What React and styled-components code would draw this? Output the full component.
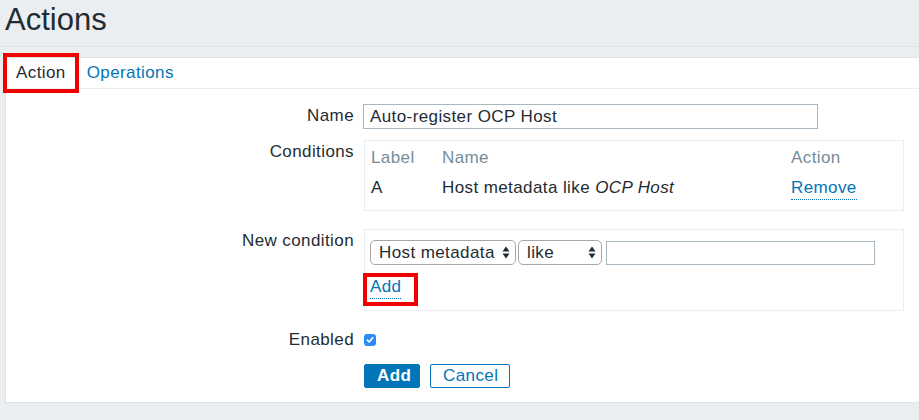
import React from "react";
import styled, { createGlobalStyle } from "styled-components";

const GlobalStyle = createGlobalStyle`
	body {
		margin: 0;
		background: #ebeef0;
		font-family: "Liberation Sans", Arial, sans-serif;
		color: #1f2c33;
	}
`;

const conditions = [{ label: "A", text: "Host metadata like ", value: "OCP Host" }];

const ArrowsIcon = () => (
	<svg width="8" height="13" viewBox="0 0 8 13">
		<path d="M4 0.5 L7.5 5.5 L0.5 5.5 Z" fill="#1f2c33" />
		<path d="M4 12.5 L7.5 7.5 L0.5 7.5 Z" fill="#1f2c33" />
	</svg>
);

const CheckIcon = () => (
	<svg width="8" height="8" viewBox="0 0 8 8">
		<path d="M1.3 4.2 L3.2 6 L6.7 1.8" fill="none" stroke="#fff" strokeWidth="1.6" strokeLinecap="round" strokeLinejoin="round" />
	</svg>
);

const App = () => {
	return (
		<>
			<GlobalStyle />
			<Header>
				<h1>Actions</h1>
			</Header>
			<Panel>
				<TabBar>
					<Tab $active $highlight>Action</Tab>
					<Tab>Operations</Tab>
				</TabBar>
				<Form>
					<Row $space={15}>
						<Label>Name</Label>
						<TextInput $width={455} defaultValue="Auto-register OCP Host" />
					</Row>
					<Row $space={11}>
						<Label>Conditions</Label>
						<Box $pad="2px 6px 7px">
							<CondTable>
								<thead>
									<tr>
										<th style={{ width: 71 }}>Label</th>
										<th style={{ width: 349 }}>Name</th>
										<th>Action</th>
									</tr>
								</thead>
								<tbody>
									{conditions.map((c) => (
										<tr key={c.label}>
											<td>{c.label}</td>
											<td>
												{c.text}
												<em>{c.value}</em>
											</td>
											<td>
												<LinkText>Remove</LinkText>
											</td>
										</tr>
									))}
								</tbody>
							</CondTable>
						</Box>
					</Row>
					<Row $space={18}>
						<Label>New condition</Label>
						<Box $pad="10px 5px 10px" $height={82}>
							<Controls>
								<SelectBox $width={146}>
									Host metadata
									<span className="arrows">
										<ArrowsIcon />
									</span>
								</SelectBox>
								<SelectBox $width={84}>
									like
									<span className="arrows">
										<ArrowsIcon />
									</span>
								</SelectBox>
								<TextInput $width={269} $small />
							</Controls>
							<Highlight>
								<LinkText>Add</LinkText>
							</Highlight>
						</Box>
					</Row>
					<Row $space={17}>
						<Label>Enabled</Label>
						<CheckLine>
							<Checkbox>
								<CheckIcon />
							</Checkbox>
						</CheckLine>
					</Row>
					<Row $space={12}>
						<Label />
						<Buttons>
							<Button $primary>Add</Button>
							<Button>Cancel</Button>
						</Buttons>
					</Row>
				</Form>
			</Panel>
		</>
	);
};

// # STYLED COMPONENTS

const Header = styled.header`
	box-sizing: border-box;
	height: 47px;
	border-bottom: 1px solid #dfe4e7;
	padding: 4px 0 0 5px;

	h1 {
		margin: 0;
		font-size: 31px;
		line-height: 31px;
		font-weight: normal;
		color: #1f2c33;
	}
`;

const Panel = styled.section`
	margin: 10px 0 0 5px;
	background: #fff;
	border: 1px solid #dfe4e7;
	border-right: none;
	padding-bottom: 14px;
`;

const TabBar = styled.nav`
	display: flex;
	gap: 5px;
	height: 30px;
	padding-left: 2px;
	border-bottom: 1px solid #ebeef0;
`;

const Tab = styled.a`
	display: block;
	padding: 0 8px;
	font-size: 17px;
	letter-spacing: 0.4px;
	line-height: 30px;
	color: ${(p) => (p.$active ? "#1f2c33" : "#0275b8")};
	cursor: pointer;
	outline: ${(p) => (p.$highlight ? "4px solid #f20000" : "none")};
	outline-offset: 1px;
`;

const Form = styled.div`
	display: flex;
	flex-direction: column;
`;

const Row = styled.div`
	display: flex;
	align-items: flex-start;
	gap: 9px;
	margin-top: ${(p) => p.$space}px;
	font-size: 17px;
	letter-spacing: 0.4px;
`;

const Label = styled.div`
	width: 348px;
	flex-shrink: 0;
	text-align: right;
	line-height: 24px;
`;

const TextInput = styled.input`
	box-sizing: border-box;
	width: ${(p) => p.$width}px;
	height: ${(p) => (p.$small ? 24 : 25)}px;
	margin: ${(p) => (p.$small ? "1px 0 0 2px" : "0")};
	border: 1px solid #a9b7c0;
	padding: 0 6px;
	font: inherit;
	font-size: 17px;
	letter-spacing: 0.4px;
	color: #1f2c33;
	outline: none;
`;

const Box = styled.div`
	box-sizing: border-box;
	width: 540px;
	margin-left: 1px;
	height: ${(p) => (p.$height ? `${p.$height}px` : "auto")};
	border: 1px solid #ebeef0;
	padding: ${(p) => p.$pad};
`;

const CondTable = styled.table`
	border-collapse: collapse;
	width: 100%;

	th,
	td {
		padding: 0;
		text-align: left;
		line-height: 30px;
		font-weight: normal;
		vertical-align: top;
	}
	th {
		color: #768d99;
	}
	em {
		font-style: italic;
	}
`;

const LinkText = styled.a`
	display: inline-block;
	color: #0275b8;
	line-height: 20px;
	padding-bottom: 1px;
	border-bottom: 1px dotted #0275b8;
	cursor: pointer;
`;

const Controls = styled.div`
	display: flex;
	align-items: flex-start;
	gap: 2px;
`;

const SelectBox = styled.div`
	position: relative;
	box-sizing: border-box;
	width: ${(p) => p.$width}px;
	height: 25px;
	border: 1px solid #a6a6a6;
	border-radius: 5px;
	padding-left: 8px;
	line-height: 23px;
	background: #fff;

	.arrows {
		position: absolute;
		right: 5px;
		top: 5px;
		display: flex;
	}
`;

const Highlight = styled.div`
	display: inline-block;
	margin: 12px 0 0 -3px;
	padding: 0 13px 3px 3px;
	outline: 4px solid #f20000;
`;

const CheckLine = styled.div`
	height: 24px;
	display: flex;
	align-items: center;
	margin-left: 1px;
`;

const Checkbox = styled.span`
	width: 12px;
	height: 12px;
	border-radius: 3px;
	background: #2d8cf4;
	display: flex;
	align-items: center;
	justify-content: center;
`;

const Buttons = styled.div`
	display: flex;
	gap: 10px;
	margin-left: 1px;
`;

const Button = styled.button`
	box-sizing: border-box;
	height: 24px;
	padding: 0 12px;
	font: inherit;
	font-size: 17px;
	letter-spacing: 0.4px;
	font-weight: ${(p) => (p.$primary ? "bold" : "normal")};
	color: ${(p) => (p.$primary ? "#fff" : "#0275b8")};
	background: ${(p) => (p.$primary ? "#0275b8" : "#fff")};
	border: 1px solid #0275b8;
	border-radius: 2px;
	cursor: pointer;
	${(p) => (p.$primary ? "width: 56px;" : "width: 80px;")}
`;

export default App;
